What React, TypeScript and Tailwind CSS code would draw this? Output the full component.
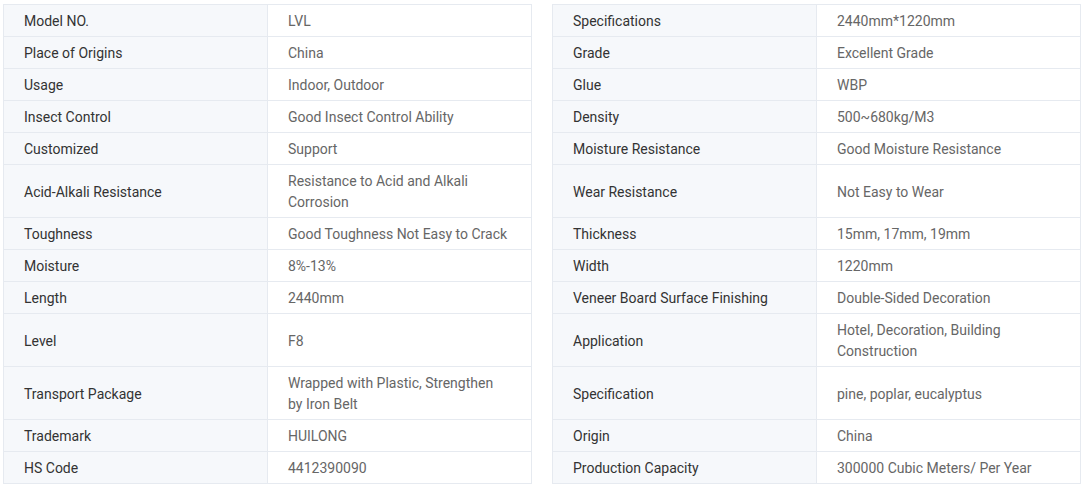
const left: [string, string][] = [
  ["Model NO.", "LVL"],
  ["Place of Origins", "China"],
  ["Usage", "Indoor, Outdoor"],
  ["Insect Control", "Good Insect Control Ability"],
  ["Customized", "Support"],
  ["Acid-Alkali Resistance", "Resistance to Acid and Alkali Corrosion"],
  ["Toughness", "Good Toughness Not Easy to Crack"],
  ["Moisture", "8%-13%"],
  ["Length", "2440mm"],
  ["Level", "F8"],
  ["Transport Package", "Wrapped with Plastic, Strengthen by Iron Belt"],
  ["Trademark", "HUILONG"],
  ["HS Code", "4412390090"],
];

const right: [string, string][] = [
  ["Specifications", "2440mm*1220mm"],
  ["Grade", "Excellent Grade"],
  ["Glue", "WBP"],
  ["Density", "500~680kg/M3"],
  ["Moisture Resistance", "Good Moisture Resistance"],
  ["Wear Resistance", "Not Easy to Wear"],
  ["Thickness", "15mm, 17mm, 19mm"],
  ["Width", "1220mm"],
  ["Veneer Board Surface Finishing", "Double-Sided Decoration"],
  ["Application", "Hotel, Decoration, Building Construction"],
  ["Specification", "pine, poplar, eucalyptus"],
  ["Origin", "China"],
  ["Production Capacity", "300000 Cubic Meters/ Per Year"],
];

function Half({ row, first }: { row: [string, string]; first: boolean }) {
  return (
    <div
      className={`grid grid-cols-[263px_263px] gap-px border-x border-b border-[#e6eaf0] bg-[#e6eaf0] ${
        first ? "border-t" : ""
      }`}
    >
      <div className="flex items-center bg-[#f6f8fb] px-5 pt-[6px] pb-[4px] text-[#333333]">{row[0]}</div>
      <div className="flex items-center bg-white px-5 pt-[6px] pb-[4px] text-[#666666]">{row[1]}</div>
    </div>
  );
}

export default function App() {
  return (
    <div
      className="h-[486px] w-[1082px] bg-white pl-[3px] pt-[4px] text-[14px] leading-[21px]"
      style={{ fontFamily: "Roboto, 'Liberation Sans', sans-serif" }}
    >
      {left.map((row, i) => (
        <div key={row[0]} className="grid w-[1078px] grid-cols-[529px_529px] gap-[20px]">
          <Half row={row} first={i === 0} />
          <Half row={right[i]} first={i === 0} />
        </div>
      ))}
    </div>
  );
}
